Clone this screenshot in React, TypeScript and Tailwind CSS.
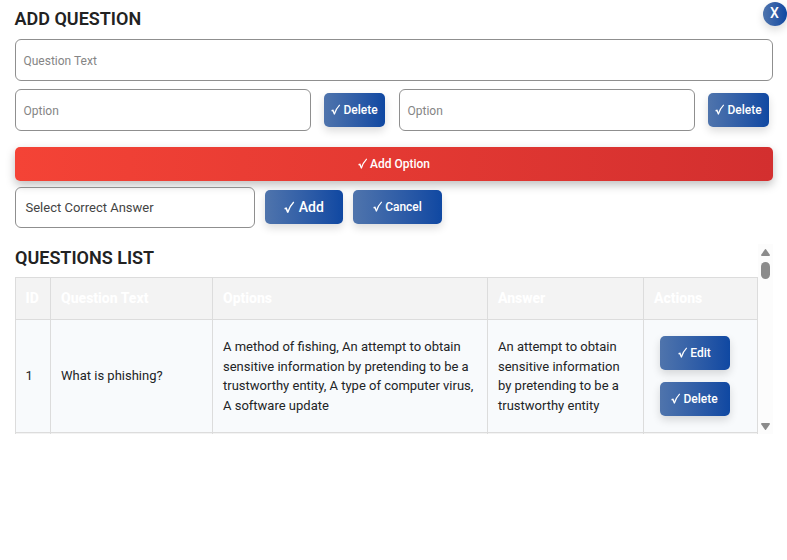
import React from "react";

const blueButton =
  "flex h-[34px] shrink-0 items-center justify-center rounded-[5px] bg-linear-to-r from-[#4f74ac] to-[#0f48a2] font-medium text-white shadow-[0_4px_8px_rgba(0,0,0,0.14)]";
const field =
  "flex items-center rounded-[6px] border border-[#8f8f8f]";

function Check({ large = false }: { large?: boolean }) {
  return (
    <svg
      viewBox="0 0 9 11"
      className={large ? "mr-[4px] h-[13px] w-[10.6px]" : "mr-[2.5px] mb-px h-[11.5px] w-[9.5px]"}
      fill="none"
      stroke="currentColor"
    >
      <path d="M0.5 6.5 L1.8 6.1 L3.2 9.4" strokeWidth="1.4" />
      <path d="M3 10 Q4.7 4.4 8.3 0.8" strokeWidth="1.15" />
    </svg>
  );
}

function ActionButton({ label, className }: { label: string; className: string }) {
  return (
    <button className={`${blueButton} ${className}`}>
      <Check />
      <span>{label}</span>
    </button>
  );
}

function OptionField() {
  return (
    <div className="flex h-[42px] items-center">
      <div className={`${field} h-[42px] w-[296px] pt-px pl-[7.5px] text-[12px] text-[#858585]`}>Option</div>
      <ActionButton label="Delete" className="ml-[13px] w-[61px] text-[12px]" />
    </div>
  );
}

const headCell = "border border-[#dcdcdc] pr-[8px] pl-[10px] text-left text-[14px] font-extrabold text-white";
const cell = "border border-[#dcdcdc] px-[10px] align-middle";

export default function App() {
  return (
    <div className="relative h-[560px] w-[787px] overflow-hidden bg-white pl-[15px] font-[Roboto,sans-serif] text-[#222426]">
      <button className="absolute top-[2px] left-[763px] flex size-6 items-center justify-center rounded-full bg-linear-to-r from-[#4f74ac] to-[#0f48a2] pr-px pb-px text-[14px] font-medium text-white shadow-[0_4px_8px_rgba(0,0,0,0.14)]">
        X
      </button>
      <div className="w-[758px]">
        <h2 className="-ml-[0.5px] flex h-[39px] items-center pb-[2px] text-[18px] font-semibold text-[#222]">ADD QUESTION</h2>
        <div className={`${field} h-[42px] pt-px pl-[7.5px] text-[12px] text-[#858585]`}>Question Text</div>
        <div className="mt-2 flex gap-[14px]">
          <OptionField />
          <OptionField />
        </div>
        <button className="mt-4 flex h-[34px] w-full items-center justify-center rounded-[5px] bg-linear-to-r from-[#f44336] to-[#d32f2f] text-[12px] font-medium text-white shadow-[0_4px_10px_rgba(0,0,0,0.25)]">
          <Check />
          <span>Add Option</span>
        </button>
        <div className="mt-[6px] flex h-[41px] items-start gap-[10px]">
          <div className={`${field} h-[41px] w-[240px] pl-[9.5px] text-[13px] text-[#444]`}>Select Correct Answer</div>
          <button className={`${blueButton} mt-[3px] w-[78px] text-[14px]`}>
            <Check large />
            <span>Add</span>
          </button>
          <ActionButton label="Cancel" className="mt-[3px] w-[89px] text-[12px]" />
        </div>
        <div className="mt-4 flex h-[190px] overflow-hidden">
          <div className="w-[743px] overflow-hidden">
            <h2 className="flex h-[33px] items-center pb-[7px] text-[18px] font-semibold text-[#222]">QUESTIONS LIST</h2>
            <table className="w-[743px] table-fixed border-collapse text-[13px] leading-[19.5px]">
              <colgroup>
                <col className="w-[35px]" />
                <col className="w-[162px]" />
                <col className="w-[275px]" />
                <col className="w-[156px]" />
                <col className="w-[114px]" />
              </colgroup>
              <thead>
                <tr className="h-[42px] bg-[#f3f3f3]">
                  <th className="border border-[#dcdcdc] pl-[9.5px] text-left text-[14px] font-extrabold text-white">ID</th>
                  <th className={headCell}>Question Text</th>
                  <th className={headCell}>Options</th>
                  <th className={headCell}>Answer</th>
                  <th className={headCell}>Actions</th>
                </tr>
              </thead>
              <tbody>
                <tr className="h-[113px] bg-[#f8fafc]">
                  <td className="border border-[#dcdcdc] pl-[9.5px] align-middle">1</td>
                  <td className={cell}>What is phishing?</td>
                  <td className={cell}>
                    A method of fishing, An attempt to obtain sensitive information by pretending to be a trustworthy
                    entity, A type of computer virus, A software update
                  </td>
                  <td className={cell}>An attempt to obtain sensitive information by pretending to be a trustworthy entity</td>
                  <td className="border border-[#dcdcdc] pl-4">
                    <div className="flex flex-col gap-3">
                      <ActionButton label="Edit" className="w-[70px] pt-px pr-px text-[12px]" />
                      <ActionButton label="Delete" className="w-[70px] pt-px pr-px text-[12px]" />
                    </div>
                  </td>
                </tr>
                <tr className="h-[113px] bg-[#f3f3f3]">
                  <td className={cell} />
                  <td className={cell} />
                  <td className={cell} />
                  <td className={cell} />
                  <td className={cell} />
                </tr>
              </tbody>
            </table>
          </div>
          <div className="flex w-[15px] flex-col items-center bg-[#fcfcfc] pt-[5px] pb-[4px]">
            <svg viewBox="0 0 9 7" className="h-[7px] w-[9px]" fill="#8b8b8b">
              <path d="M4 0.2 Q4.5 -0.2 5 0.2 L9 6 Q9 7 8 7 H1 Q0 7 0 6Z" />
            </svg>
            <div className="mt-[6px] h-[17px] w-[9px] rounded-full bg-[#8b8b8b]" />
            <svg viewBox="0 0 9 7" className="mt-auto h-[7px] w-[9px]" fill="#8b8b8b">
              <path d="M4 6.8 Q4.5 7.2 5 6.8 L9 1 Q9 0 8 0 H1 Q0 0 0 1Z" />
            </svg>
          </div>
        </div>
      </div>
    </div>
  );
}
